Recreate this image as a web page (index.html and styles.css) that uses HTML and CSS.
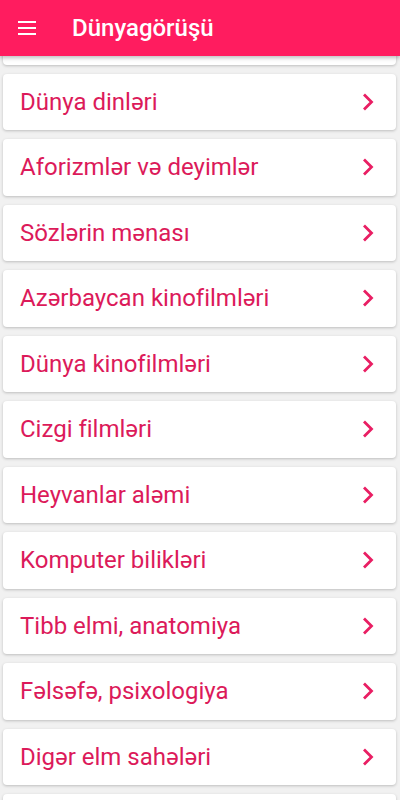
FILE: index.html
```html
<!DOCTYPE html>
<html lang="az">
  <head>
    <meta charset="UTF-8" />
    <meta name="viewport" content="width=device-width, initial-scale=1.0" />
    <title>Dünyagörüşü</title>
    <link rel="stylesheet" href="styles.css">
  </head>
  <body>
    <div id="toolbar">
      <svg class="menu" width="24" height="24" viewBox="0 0 24 24">
        <path d="M3 6h18M3 12h18M3 18h18" stroke="#fff" stroke-width="2" />
      </svg>
      <h1>Dünyagörüşü</h1>
    </div>
    <div id="list">
      <div class="card"></div>
      <div class="card"><span>Dünya dinləri</span><i></i></div>
      <div class="card"><span>Aforizmlər və deyimlər</span><i></i></div>
      <div class="card"><span>Sözlərin mənası</span><i></i></div>
      <div class="card"><span>Azərbaycan kinofilmləri</span><i></i></div>
      <div class="card"><span>Dünya kinofilmləri</span><i></i></div>
      <div class="card"><span>Cizgi filmləri</span><i></i></div>
      <div class="card"><span>Heyvanlar aləmi</span><i></i></div>
      <div class="card"><span>Komputer bilikləri</span><i></i></div>
      <div class="card"><span>Tibb elmi, anatomiya</span><i></i></div>
      <div class="card"><span>Fəlsəfə, psixologiya</span><i></i></div>
      <div class="card"><span>Digər elm sahələri</span><i></i></div>
      <div class="card"></div>
    </div>
    <script>
      // draw the chevrons once instead of repeating the svg in every row
      const chevron =
        '<svg width="12" height="18" viewBox="0 0 12 18"><path d="M2 1.5L9.5 9 2 16.5" fill="none" stroke="#e91e63" stroke-width="2.8" /></svg>';
      document.querySelectorAll(".card i").forEach((el) => {
        el.innerHTML = chevron;
      });
    </script>
  </body>
</html>
```

FILE: styles.css
```css
body {
  margin: 0;
  height: 800px;
  overflow: hidden;
  background: #f1f1f1;
  font-family: Roboto, "Noto Sans", sans-serif;
}
#toolbar {
  position: relative;
  z-index: 2;
  height: 56px;
  display: flex;
  align-items: center;
  background: #ff1c5f;
  box-shadow: 0 2px 4px rgba(0, 0, 0, 0.25);
}
.menu {
  margin-left: 15px;
  width: 24px;
  height: 24px;
}
#toolbar h1 {
  margin: 0 0 0 33px;
  color: #fff;
  font-size: 24px;
  font-weight: 500;
}
#list {
  display: flex;
  flex-direction: column;
  gap: 9px;
  padding: 0 4px 0 3px;
  margin-top: -48px;
}
.card {
  height: 56.5px;
  flex-shrink: 0;
  display: flex;
  align-items: center;
  justify-content: space-between;
  background: #fff;
  border-radius: 4px;
  box-shadow: 0 1px 3px rgba(0, 0, 0, 0.22);
  padding: 0 22px 0 17px;
}
.card span {
  color: #dc1a5a;
  font-size: 24px;
}
.card i {
  display: flex;
}
```
